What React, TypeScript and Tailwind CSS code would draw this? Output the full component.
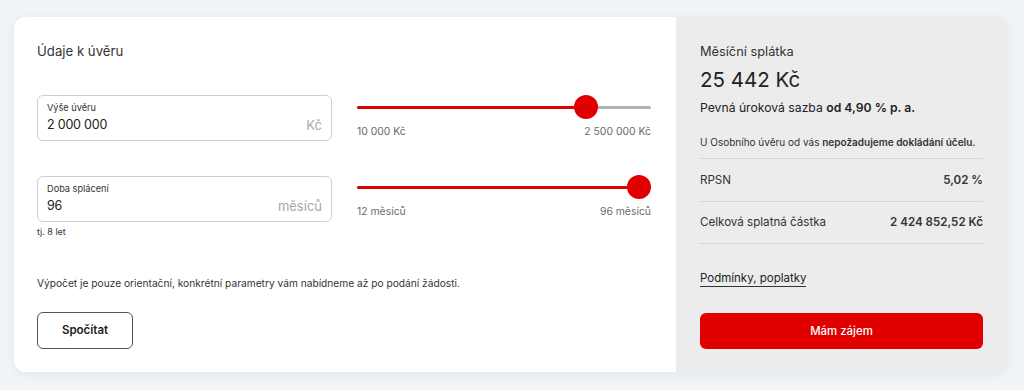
import React from 'react';

const font = { fontFamily: 'Inter, "Noto Sans", sans-serif' };

const Slider = ({ percent, min, max }: { percent: number; min: string; max: string }) => (
  <div className="w-[294px]">
    <div className="relative h-[24px] flex items-center">
      <div className="w-full h-[3px] bg-[#b3b3b3] rounded-full" />
      <div className="absolute left-0 h-[3px] bg-[#e00000] rounded-full" style={{ width: `${percent}%` }} />
      <div
        className="absolute w-[24px] h-[24px] rounded-full bg-[#e00000] -translate-x-1/2"
        style={{ left: `${percent}%` }}
      />
    </div>
    <div className="flex justify-between text-[10.4px] text-[#6b6b6b] mt-[5px]">
      <span>{min}</span>
      <span>{max}</span>
    </div>
  </div>
);

const Field = ({ label, value, unit }: { label: string; value: string; unit: string }) => (
  <div className="w-[295px] h-[46px] border border-[#cfcfcf] rounded-[6px] bg-white px-[9px] pt-[5px]">
    <div className="text-[9.2px] text-[#333] leading-[14px]">{label}</div>
    <div className="flex justify-between items-center">
      <span className="text-[12.5px] text-[#222] leading-[20px] tracking-[-0.2px]">{value}</span>
      <span className="text-[13px] text-[#a8a8a8] leading-[20px]">{unit}</span>
    </div>
  </div>
);

export default function App() {
  return (
    <div className="w-[1024px] h-[390px] bg-[#f1f4f7] pt-[17px] pl-[14px]" style={font}>
      <div className="w-[994px] h-[355px] flex rounded-[12px] overflow-hidden shadow-[0_2px_10px_rgba(0,0,0,0.06)]">
        {/* Left */}
        <div className="w-[662px] bg-white pl-[23px] pr-[25px] pt-[24px]">
          <h2 className="text-[13.2px] text-[#333] leading-[20px]">Údaje k úvěru</h2>

          <div className="flex gap-[25px] mt-[34px]">
            <Field label="Výše úvěru" value="2 000 000" unit="Kč" />
            <Slider percent={78} min="10 000 Kč" max="2 500 000 Kč" />
          </div>

          <div className="flex gap-[25px] mt-[35px]">
            <div>
              <Field label="Doba splácení" value="96" unit="měsíců" />
              <div className="text-[9px] text-[#333] mt-[3px]">tj. 8 let</div>
            </div>
            <div className="-mt-[1px]">
              <Slider percent={96} min="12 měsíců" max="96 měsíců" />
            </div>
          </div>

          <p className="text-[10.2px] text-[#333] mt-[37px]">
            Výpočet je pouze orientační, konkrétní parametry vám nabídneme až po podání žádosti.
          </p>

          <button className="mt-[21px] w-[96px] h-[37px] border border-[#555] rounded-[6px] text-[11.5px] font-semibold text-[#222]">
            Spočítat
          </button>
        </div>

        {/* Right */}
        <div className="w-[332px] bg-[#ececec] pl-[24px] pr-[25px] pt-[25px]">
          <div className="text-[12.8px] text-[#333] leading-[20px]">Měsíční splátka</div>
          <div className="text-[20.5px] text-[#222] leading-[30px] mt-[3px]">25 442 Kč</div>
          <div className="text-[12.2px] text-[#222] mt-[4px]">
            Pevná úroková sazba <span className="font-semibold">od 4,90 % p. a.</span>
          </div>
          <div className="text-[10px] text-[#333] mt-[18px] pb-[8px] border-b border-[#d6d6d6] whitespace-nowrap">
            U Osobního úvěru od vás <span className="font-semibold">nepožadujeme dokládání účelu.</span>
          </div>
          <div className="flex justify-between text-[11.6px] text-[#333] h-[43px] items-center border-b border-[#d6d6d6]">
            <span>RPSN</span>
            <span className="font-semibold">5,02 %</span>
          </div>
          <div className="flex justify-between text-[11.6px] text-[#333] h-[42px] items-center border-b border-[#d6d6d6]">
            <span>Celková splatná částka</span>
            <span className="font-semibold">2 424 852,52 Kč</span>
          </div>
          <div className="mt-[20px]">
            <span className="text-[11.5px] text-[#222] border-b-[1.5px] border-[#333] pb-[1px]">Podmínky, poplatky</span>
          </div>
          <button className="mt-[25px] w-full h-[36px] bg-[#e00000] rounded-[6px] text-white text-[11.4px] font-medium">
            Mám zájem
          </button>
        </div>
      </div>
    </div>
  );
}
